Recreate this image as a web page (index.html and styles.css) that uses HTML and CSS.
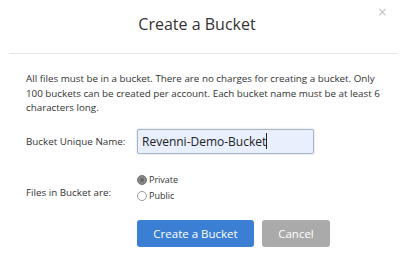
FILE: index.html
```html
<!DOCTYPE html>
<html>
<head>
<meta charset="utf-8">
<link rel="stylesheet" href="styles.css">
</head>
<body>
<div class="modal">
  <div class="header">
    <h1 class="title">Create a Bucket</h1>
    <span class="close">&times;</span>
  </div>
  <div class="body">
    <p class="intro">All files must be in a bucket. There are no charges for creating a bucket. Only 100 buckets can be created per account. Each bucket name must be at least 6 characters long.</p>
    <div class="row name-row">
      <label class="label">Bucket Unique Name:</label>
      <div class="input">Revenni-Demo-Bucket<span class="caret"></span></div>
    </div>
    <div class="row radio-row">
      <span class="label radio-label">Files in Bucket are:</span>
      <div class="radios">
        <div class="radio"><span class="dot checked"></span>Private</div>
        <div class="radio"><span class="dot"></span>Public</div>
      </div>
    </div>
    <div class="actions">
      <button class="btn primary">Create a Bucket</button>
      <button class="btn secondary">Cancel</button>
    </div>
  </div>
</div>
</body>
</html>
```

FILE: styles.css
```css
html, body {
  margin: 0;
  padding: 0;
  background: #fff;
}
body {
  font-family: "Open Sans", "Noto Sans", sans-serif;
  color: #333;
  width: 400px;
  height: 266px;
  overflow: hidden;
}
.modal {
  width: 400px;
}
.header {
  position: relative;
  margin: 0 3px 0 9px;
  height: 54px;
  border-bottom: 1px solid #e5e5e5;
  display: flex;
  justify-content: center;
  box-sizing: border-box;
  padding-top: 13px;
}
.title {
  margin: 0;
  font-size: 16px;
  line-height: 22px;
  font-weight: 400;
  color: #333;
  padding-right: 12px;
}
.close {
  position: absolute;
  right: 10px;
  top: 2px;
  font-size: 16px;
  color: #c4c4c4;
  line-height: 20px;
}
.body {
  padding: 18px 0 0 26px;
}
.intro {
  margin: 0;
  font-size: 9.8px;
  line-height: 14.5px;
  width: 356px;
  color: #333;
}
.row {
  display: flex;
  align-items: center;
}
.label {
  width: 111px;
  font-size: 9.8px;
  color: #333;
}
.name-row {
  margin-top: 13px;
}
.input {
  box-sizing: border-box;
  width: 177px;
  height: 25px;
  border: 1px solid #a9b3c2;
  border-radius: 2px;
  background: #e8f0fe;
  box-shadow: 0 0 2px #c0c8d8;
  font-size: 12px;
  line-height: 23px;
  padding-left: 4px;
  color: #222;
  display: flex;
  align-items: center;
}
.caret {
  display: inline-block;
  width: 1px;
  height: 16px;
  background: #222;
}
.radio-row {
  margin-top: 19px;
  align-items: flex-end;
}
.radio-label {
  padding-bottom: 4px;
}
.radios {
  display: flex;
  flex-direction: column;
  gap: 2px;
}
.radio {
  display: flex;
  align-items: center;
  font-size: 9px;
  color: #333;
  line-height: 14px;
}
.dot {
  box-sizing: border-box;
  width: 10px;
  height: 10px;
  border-radius: 50%;
  border: 1px solid #999;
  margin-right: 2px;
  background: #fff;
}
.dot.checked {
  background: #666;
  border-color: #777;
  box-shadow: inset 0 0 0 2px #8a8a8a;
}
.actions {
  display: flex;
  gap: 8px;
  margin-top: 17px;
  padding-left: 111px;
}
.btn {
  height: 27px;
  border: none;
  border-radius: 3px;
  font-family: "Open Sans", "Noto Sans", sans-serif;
  font-size: 11.5px;
  color: #fff;
  padding: 0;
}
.primary {
  width: 117px;
  background: #3b7fd4;
}
.secondary {
  width: 68px;
  background: #aaaaaa;
}
```
